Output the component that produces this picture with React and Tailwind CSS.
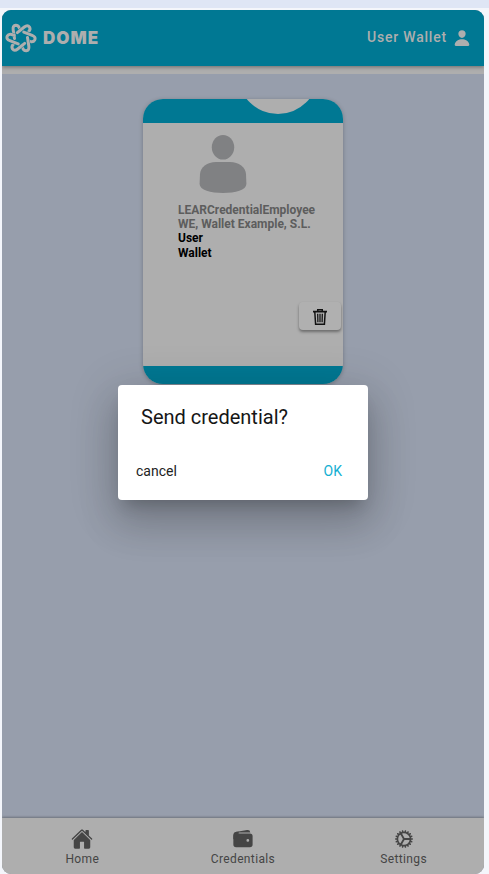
import React from "react";
import { IoHome, IoWallet, IoPerson, IoCog } from "react-icons/io5";

function Logo() {
  const loop = "M-6 -2.5 L-3.2 -11 Q-1.8 -15 1.2 -13.8 Q3.6 -12.6 3 -9.5 L2.4 -7";
  return (
    <svg viewBox="-16 -16 32 32" className="h-8 w-8 shrink-0" fill="none" strokeLinecap="round">
      {[-27, 33, 93, 153, 213, 273].map((a) => (
        <g key={a} transform={`rotate(${a})`}>
          <path d={loop} stroke="#007893" strokeWidth="3.800" strokeLinecap="butt" />
          <path d={loop} stroke="#aeaeae" strokeWidth="3" />
        </g>
      ))}
    </svg>
  );
}

function TrashIcon() {
  return (
    <svg viewBox="0 0 14 16" className="mt-0.5 h-4 w-[14px]" fill="none" stroke="#111">
      <path d="M0 2.7h14" strokeWidth="1.7" />
      <path d="M4.7 2.5V.8h4.6v1.7" strokeWidth="1.4" />
      <path d="M1.8 3l.8 12.2h8.8L12.2 3" strokeWidth="1.5" />
      <path d="M4.7 4.8l.2 8.5M7 4.8v8.5M9.3 4.8l-.2 8.5" strokeWidth="1.3" />
    </svg>
  );
}

function Avatar() {
  return (
    <svg viewBox="0 0 70 70" className="ml-[45px] mt-[6px] h-[70px] w-[70px] shrink-0" fill="#808183">
      <ellipse cx="35" cy="18.3" rx="11.2" ry="12.3" />
      <path d="M28 33h14c9 0 15.500 5 16 12l.4 10c0 6-11 9-23.400 9s-23.400-3-23.400-9l.4-10c.5-7 7-12 16-12z" />
    </svg>
  );
}

function Card() {
  return (
    <article className="flex h-[285px] w-[200px] flex-col overflow-hidden rounded-[20px] bg-[#aeaeae] shadow-[0_1px_4px_rgba(0,0,0,0.25)]">
      <svg viewBox="0 0 200 24" className="h-6 w-[200px] shrink-0 bg-[#007893]">
        <circle cx="135" cy="-25" r="40" fill="#aeaeae" />
      </svg>
      <Avatar />
      <div className="ml-[35px] mt-[4px] whitespace-nowrap text-[12px] font-bold leading-[14px] text-black">
        <p className="text-[#5d5d5d]">LEARCredentialEmployee</p>
        <p className="text-[#5d5d5d]">WE, Wallet Example, S.L.</p>
        <p>User</p>
        <p className="mt-px">Wallet</p>
      </div>
      <div className="mb-[36px] mr-[2px] mt-auto flex h-7 w-[42px] items-center justify-center self-end rounded-[4px] bg-[#b0b0b0] shadow-[0_2px_3px_rgba(0,0,0,0.38)]">
        <TrashIcon />
      </div>
      <div className="h-[18px] shrink-0 bg-[#007893]" />
    </article>
  );
}

function Dialog() {
  return (
    <section className="absolute left-[116px] top-[375px] flex h-[115px] w-[250px] flex-col rounded-[4px] bg-white shadow-[0_11px_15px_-7px_rgba(0,0,0,0.2),0_24px_38px_3px_rgba(0,0,0,0.14),0_9px_46px_8px_rgba(0,0,0,0.12)]">
      <h2 className="ml-[23px] mt-[20px] text-[20px] leading-6 text-[#161616]">Send credential?</h2>
      <div className="ml-[18px] mr-[26px] mt-[32px] flex justify-between text-[14px] leading-5">
        <button className="text-[#222]">cancel</button>
        <button className="font-[450] text-[#14afd2]">OK</button>
      </div>
    </section>
  );
}

const tabs = [
  { label: "Home", Icon: IoHome },
  { label: "Credentials", Icon: IoWallet },
  { label: "Settings", Icon: IoCog },
];

export default function App() {
  return (
    <div className="h-[874px] w-[489px] overflow-hidden bg-[linear-gradient(180deg,#dfe6f5_0px,#dfe6f5_8px,#f4f6fb_8px)] pl-[2px] pt-[10px] font-['Roboto',sans-serif]">
      <main className="relative flex h-[864px] w-[482px] flex-col overflow-hidden rounded-[9px] bg-[#979eac]">
        <header className="z-10 flex h-14 shrink-0 items-center bg-[#007893] pl-[3px] pr-[13px] text-[#aeaeae] shadow-[0_1px_4px_rgba(0,0,0,0.4)]">
          <Logo />
          <span className="ml-[6px] font-['Inter',sans-serif] text-[17px] font-black leading-5 tracking-[1px]">DOME</span>
          <span className="mb-0.5 ml-auto text-[14px] font-medium tracking-[0.8px]">User Wallet</span>
          <IoPerson className="ml-[6px] h-[18px] w-[18px]" />
        </header>
        <div className="h-2 shrink-0 bg-[#aeaeae]" />
        <div className="flex flex-1 justify-center pt-[25px]">
          <Card />
        </div>
        <nav className="grid h-[56px] shrink-0 grid-cols-3 bg-[#aeaeae] text-[#454545] shadow-[0_-1px_2px_rgba(0,0,0,0.28)]">
          {tabs.map(({ label, Icon }) => (
            <div key={label} className="flex flex-col items-center pt-[10px]">
              <Icon className="h-[22px] w-[22px]" />
              <span className="mt-px text-[12px] leading-4 tracking-[0.36px]">{label}</span>
            </div>
          ))}
        </nav>
        <Dialog />
      </main>
    </div>
  );
}
